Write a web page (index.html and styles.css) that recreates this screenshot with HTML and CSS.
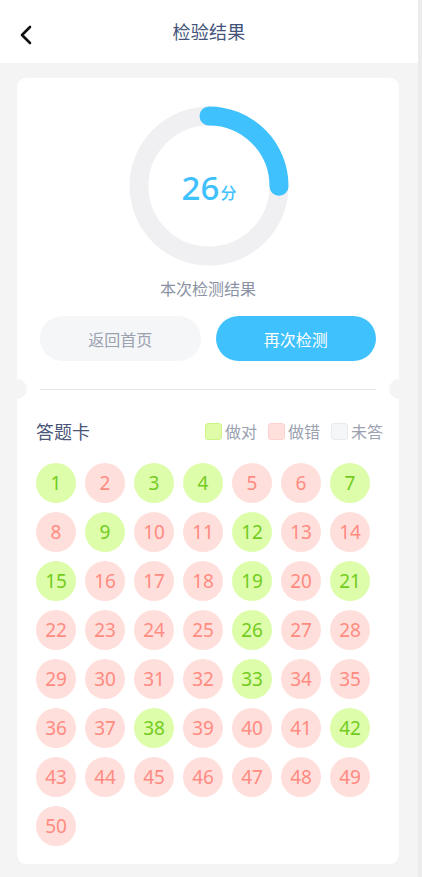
FILE: index.html
```html
<!DOCTYPE html>
<html lang="zh">
<head>
<meta charset="utf-8">
<title>检验结果</title>
<link rel="stylesheet" href="styles.css">
</head>
<body>
<div class="page">
  <header class="topbar">
    <svg class="back" width="14" height="22" viewBox="0 0 14 22"><path d="M11 3 L3 11 L11 19" fill="none" stroke="#111" stroke-width="2.6" stroke-linecap="round" stroke-linejoin="round"/></svg>
    <h1 class="title">检验结果</h1>
  </header>
  <main class="card">
    <section class="result">
      <div class="ring">
        <svg width="160" height="160" viewBox="0 0 160 160">
          <circle cx="80" cy="80" r="70" fill="none" stroke="#f0f0f2" stroke-width="19"/>
          <circle cx="80" cy="80" r="70" fill="none" stroke="#3ec1fd" stroke-width="19" stroke-linecap="round" stroke-dasharray="110 440" transform="rotate(-90 80 80)"/>
        </svg>
        <div class="score"><span class="num">26</span><span class="unit">分</span></div>
      </div>
      <div class="label">本次检测结果</div>
      <div class="actions">
        <button class="btn btn-home">返回首页</button>
        <button class="btn btn-again">再次检测</button>
      </div>
    </section>
    <div class="divider"><span class="notch notch-l"></span><span class="line"></span><span class="notch notch-r"></span></div>
    <section class="sheet">
      <div class="sheet-head">
        <h2 class="sheet-title">答题卡</h2>
        <div class="legend">
          <span class="lg-item"><i class="sq sq-ok"></i>做对</span>
          <span class="lg-item"><i class="sq sq-bad"></i>做错</span>
          <span class="lg-item"><i class="sq sq-none"></i>未答</span>
        </div>
      </div>
      <div class="grid">
        <span class="q ok">1</span><span class="q bad">2</span><span class="q ok">3</span><span class="q ok">4</span><span class="q bad">5</span><span class="q bad">6</span><span class="q ok">7</span>
        <span class="q bad">8</span><span class="q ok">9</span><span class="q bad">10</span><span class="q bad">11</span><span class="q ok">12</span><span class="q bad">13</span><span class="q bad">14</span>
        <span class="q ok">15</span><span class="q bad">16</span><span class="q bad">17</span><span class="q bad">18</span><span class="q ok">19</span><span class="q bad">20</span><span class="q ok">21</span>
        <span class="q bad">22</span><span class="q bad">23</span><span class="q bad">24</span><span class="q bad">25</span><span class="q ok">26</span><span class="q bad">27</span><span class="q bad">28</span>
        <span class="q bad">29</span><span class="q bad">30</span><span class="q bad">31</span><span class="q bad">32</span><span class="q ok">33</span><span class="q bad">34</span><span class="q bad">35</span>
        <span class="q bad">36</span><span class="q bad">37</span><span class="q ok">38</span><span class="q bad">39</span><span class="q bad">40</span><span class="q bad">41</span><span class="q ok">42</span>
        <span class="q bad">43</span><span class="q bad">44</span><span class="q bad">45</span><span class="q bad">46</span><span class="q bad">47</span><span class="q bad">48</span><span class="q bad">49</span>
        <span class="q bad">50</span>
      </div>
    </section>
  </main>
</div>
</body>
</html>
```
FILE: styles.css
```css
* { box-sizing: border-box; margin: 0; padding: 0; }
html, body { height: 100%; }
body {
  background: #ececec;
  font-family: "Noto Sans CJK SC", "Noto Sans", sans-serif;
  overflow: hidden;
}
.page {
  width: 418px;
  min-height: 877px;
  background: #f4f4f4;
  padding-bottom: 14px;
}
.topbar {
  height: 63px;
  background: #fff;
  display: flex;
  align-items: center;
  justify-content: center;
  position: relative;
}
.back { position: absolute; left: 19px; top: 24px; }
.title {
  font-size: 18px;
  font-weight: 400;
  color: #44547a;
  letter-spacing: 0.3px;
  margin-top: -2px;
}
.card {
  margin: 15px 19px 0 17px;
  background: #fff;
  border-radius: 9px;
  padding: 28px 0 18px;
}
.result {
  display: flex;
  flex-direction: column;
  align-items: center;
  padding: 0 23px;
}
.ring {
  width: 160px;
  height: 160px;
  position: relative;
  margin-left: 2px;
}
.ring svg { display: block; }
.score {
  position: absolute;
  inset: 0;
  display: flex;
  align-items: center;
  justify-content: center;
  color: #3ec1fd;
  padding-top: 2px;
}
.num { font-size: 33px; font-weight: 500; letter-spacing: 0; line-height: 1; font-family: "Noto Sans", sans-serif; }
.unit { font-size: 16px; font-weight: 500; margin-top: 9px; margin-left: 1px; }
.label {
  margin-top: 10px;
  font-size: 16px;
  color: #8a92a4;
  line-height: 24px;
}
.actions {
  margin-top: 16px;
  width: 100%;
  display: flex;
  gap: 15px;
}
.btn {
  flex: 1;
  height: 45px;
  border: none;
  border-radius: 23px;
  font-family: inherit;
  font-size: 16px;
}
.btn-home { background: #f4f6f8; color: #9ba1af; }
.btn-again { background: #3ec1fd; color: #fff; }
.divider {
  display: flex;
  align-items: center;
  height: 20px;
  margin-top: 18px;
}
.notch {
  width: 10px;
  height: 20px;
  background: #f4f4f4;
  flex: none;
}
.notch-l { border-radius: 0 10px 10px 0; }
.notch-r { border-radius: 10px 0 0 10px; }
.line {
  flex: 1;
  height: 1px;
  background: #e2e4e9;
  margin: 0 13px;
}
.sheet { padding: 0 18px 0 19px; }
.sheet-head {
  display: flex;
  align-items: center;
  justify-content: space-between;
  margin-top: 18px;
  height: 28px;
}
.sheet-title {
  font-size: 18px;
  font-weight: 400;
  color: #4a5577;
}
.legend {
  display: flex;
  gap: 11px;
  margin-right: -2px;
}
.lg-item {
  display: flex;
  align-items: center;
  font-size: 16px;
  color: #9ba1af;
  gap: 3px;
}
.sq {
  width: 17px;
  height: 17px;
  border-radius: 3px;
  border: 1px solid;
  display: inline-block;
}
.sq-ok { background: #e0fca9; border-color: #cdf585; }
.sq-bad { background: #ffe0dd; border-color: #ffd2ce; }
.sq-none { background: #f4f6f8; border-color: #e8eaee; }
.grid {
  margin-top: 18px;
  display: grid;
  grid-template-columns: repeat(7, 40px);
  gap: 9px;
}
.q {
  width: 40px;
  height: 40px;
  border-radius: 50%;
  display: flex;
  align-items: center;
  justify-content: center;
  font-size: 19px;
  font-family: "Noto Sans", sans-serif;
}
.q.ok { background: #defdab; color: #72cc1e; }
.q.bad { background: #ffdfdc; color: #ff8b81; }
```
